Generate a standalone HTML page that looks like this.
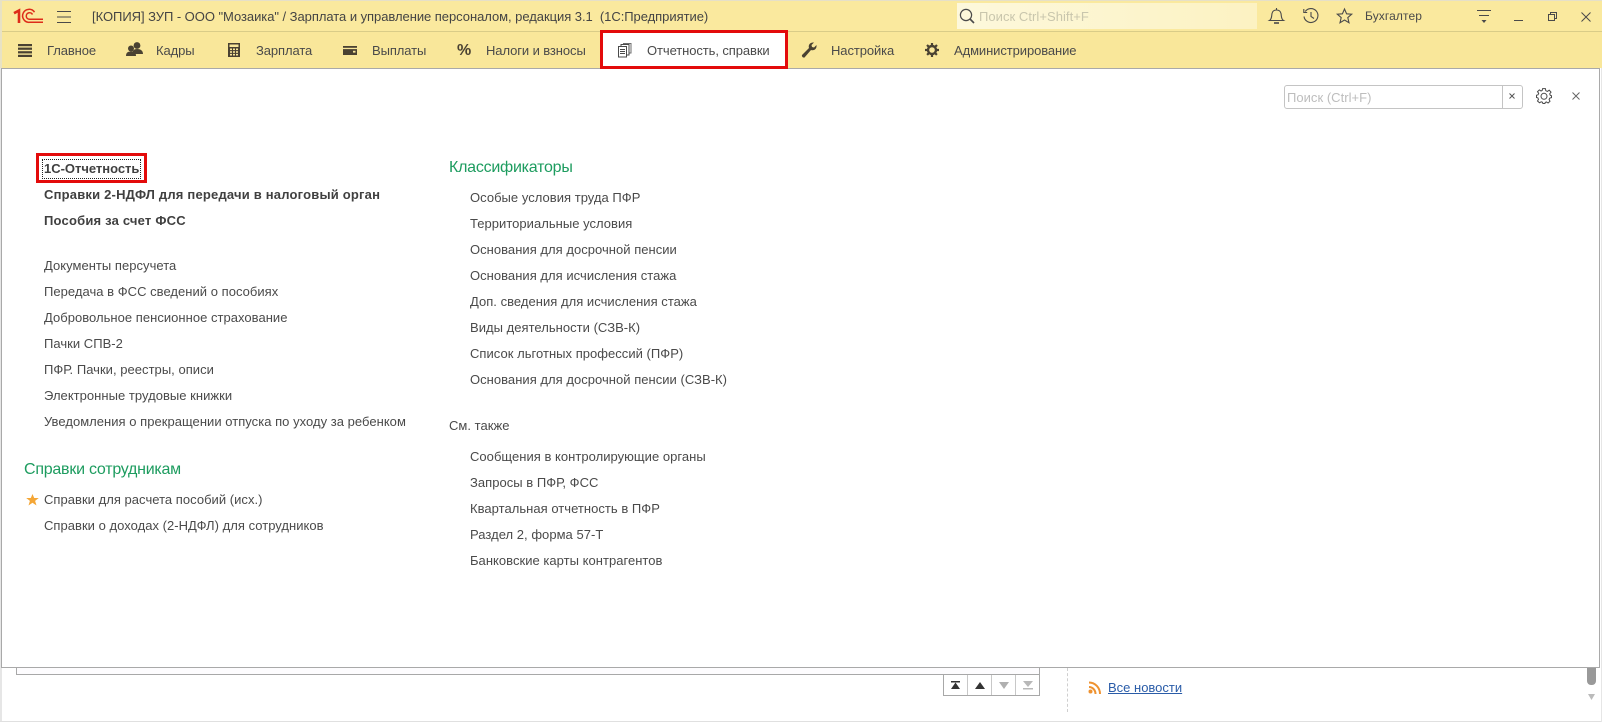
<!DOCTYPE html>
<html lang="ru"><head><meta charset="utf-8"><title>1C</title>
<style>
html,body{margin:0;padding:0;background:#fff}
#p{position:relative;width:1602px;height:722px;overflow:hidden;background:#fff;font:13px/16px "Liberation Sans",Arial,sans-serif;color:#4a4a4a}
.a{position:absolute;white-space:nowrap}
.t{position:absolute;white-space:nowrap;height:16px;letter-spacing:.03px}
.m{letter-spacing:-.09px}
.b{font-weight:bold;color:#404040;letter-spacing:.2px}
.g{color:#1d9c5f;font-size:16px;line-height:20px;height:20px;letter-spacing:-.24px}
svg{position:absolute;overflow:visible}
</style></head><body><div id="p">
<div class="a" style="left:0;top:0;width:1602px;height:1px;background:#e6e0c8"></div>
<div class="a" style="left:0;top:1px;width:1602px;height:31px;background:#fae99e;border-bottom:1px solid #d9cc88;box-sizing:border-box"></div>
<div class="a" style="left:0;top:32px;width:1602px;height:36px;background:#f9e79a"></div>
<div class="a" style="left:0;top:0;width:2px;height:68px;background:#e8e2c4"></div>
<div class="a" style="left:957px;top:3px;width:300px;height:26px;background:linear-gradient(90deg,#fdf8dc,#fcf2c2)"></div>

<!-- logo -->
<svg style="left:14px;top:9px" width="29" height="14" viewBox="0 0 29 14" fill="none" stroke="#dd2c1a">
<path d="M0 4.200 L5 1.500 V14" stroke-width="2.600"/>
<path d="M20.500 3.200 A6.500 6.500 0 1 0 15.500 13.300 H29" stroke-width="1.500"/>
<path d="M18.500 5.500 A3.300 3.300 0 1 0 15.500 10.300 H29" stroke-width="1.500"/>
</svg>
<svg style="left:57px;top:11px" width="15" height="12" fill="none" stroke="#4a4a4a"><path d="M0 .5H14M0 6H14M0 11.500H14"/></svg>
<div class="t" style="left:92px;top:9px;letter-spacing:-.045px;color:#444">[КОПИЯ] ЗУП - ООО "Мозаика" / Зарплата и управление персоналом, редакция 3.1&nbsp; (1С:Предприятие)</div>

<svg style="left:959px;top:8px" width="16" height="17" fill="none" stroke="#4a4a4a"><circle cx="7" cy="7" r="5.600" stroke-width="1.200"/><path d="M11 11 L15 15" stroke-width="1.600"/></svg>
<div class="t" style="left:979px;top:9px;color:#c9c6ad;letter-spacing:.05px">Поиск Ctrl+Shift+F</div>

<svg style="left:1269px;top:8px" width="15" height="17" fill="none" stroke="#4a4a4a" stroke-width="1.100"><path d="M.5 12.500 C3 11 2.500 8 3 5.500 C3.500 3 5 2 7.500 2 C10 2 11.500 3 12 5.500 C12.500 8 12 11 14.500 12.500 Z"/><path d="M7.500 0V2"/><path d="M5 15H10" stroke-width="1.600"/></svg>
<svg style="left:1303px;top:8px" width="16" height="16" fill="none" stroke="#4a4a4a" stroke-width="1.100"><path d="M2.200 3.500 A7 7 0 1 1 1 8.500"/><path d="M.8 1V4.500H4.200"/><path d="M8 4V8.500L11 10.500"/></svg>
<svg style="left:1337px;top:8px" width="16" height="16" fill="none" stroke="#4a4a4a" stroke-width="1.100"><path d="M7.500 1 L9.600 5.800 L14.700 6.200 L10.800 9.600 L12 14.700 L7.500 12 L3 14.700 L4.200 9.600 L.3 6.200 L5.400 5.800 Z"/></svg>
<div class="t" style="left:1365px;top:8px;font-size:12px;letter-spacing:.1px">Бухгалтер</div>
<svg style="left:1477px;top:10px" width="15" height="14" fill="#4a4a4a" stroke="#4a4a4a"><path d="M0 .5H14M2 5.500H12" fill="none"/><path d="M4.500 10H9.500L7 13Z" stroke="none"/></svg>
<svg style="left:1514px;top:20px" width="10" height="2"><rect width="9" height="1" fill="#4a4a4a"/></svg>
<svg style="left:1548px;top:12px" width="10" height="10" fill="none" stroke="#4a4a4a"><rect x=".5" y="2.500" width="6" height="6"/><path d="M2.500 2.500V.5H8.500V6.500H6.500"/></svg>
<svg style="left:1581px;top:12px" width="11" height="10" fill="none" stroke="#4a4a4a"><path d="M.5 .5L9.500 9.500M9.500 .5L.5 9.500"/></svg>

<!-- menu -->
<svg style="left:18px;top:44px" width="15" height="14" fill="#4a4232"><rect width="14" height="2.200"/><rect y="3.600" width="14" height="2.200"/><rect y="7.200" width="14" height="2.200"/><rect y="10.800" width="14" height="2.200"/></svg>
<div class="t m" style="left:47px;top:43px">Главное</div>
<svg style="left:126px;top:42px" width="17" height="15" fill="#4a4232"><circle cx="11" cy="3.500" r="3.400"/><path d="M6 13 C6 8.500 8 7 11 7 C14.500 7 17 8.500 17 12 H9 V13Z"/><circle cx="5" cy="6.500" r="3"/><path d="M0 14 C0 10.500 2 9.500 5 9.500 C8 9.500 10 10.500 10 14Z"/></svg>
<div class="t m" style="left:156px;top:43px">Кадры</div>
<svg style="left:228px;top:43px" width="13" height="14"><rect width="12" height="14" fill="#4a4232"/><rect x="1.500" y="1.500" width="9" height="2.500" fill="#f9e79a"/><g fill="#f9e79a"><rect x="2" y="5.500" width="2" height="1.600"/><rect x="5" y="5.500" width="2" height="1.600"/><rect x="8" y="5.500" width="2" height="1.600"/><rect x="2" y="8.200" width="2" height="1.600"/><rect x="5" y="8.200" width="2" height="1.600"/><rect x="8" y="8.200" width="2" height="1.600"/><rect x="2" y="10.900" width="2" height="1.600"/><rect x="5" y="10.900" width="2" height="1.600"/><rect x="8" y="10.900" width="2" height="1.600"/></g></svg>
<div class="t m" style="left:256px;top:43px">Зарплата</div>
<svg style="left:343px;top:46px" width="15" height="10"><rect width="14" height="9" fill="#4a4232"/><rect y="1.800" width="14" height="1.300" fill="#f9e79a"/><rect x="10" y="4.800" width="2.500" height="1.800" fill="#f9e79a"/></svg>
<div class="t m" style="left:372px;top:43px">Выплаты</div>
<div class="a" style="left:457px;top:42px;font:bold 16px/18px 'Liberation Sans',sans-serif;color:#4a4232">%</div>
<div class="t m" style="left:486px;top:43px">Налоги и взносы</div>
<svg style="left:801px;top:42px" width="16" height="16" fill="#4a4232"><path d="M1 13 L8 6 C7 3 9 0 13 .5 L10.500 3 L11 5 L13 5.500 L15.500 3 C16 7 13 9 10 8 L3.500 15.500 C2 16 .5 14.500 1 13Z"/></svg>
<div class="t m" style="left:831px;top:43px">Настройка</div>
<svg style="left:925px;top:43px" width="14" height="14" viewBox="0 0 14 14"><circle cx="7" cy="7" r="4" fill="none" stroke="#4a4232" stroke-width="2.400"/><path d="M7 0V14M0 7H14M2 2L12 12M12 2L2 12" stroke="#4a4232" stroke-width="2.200" stroke-dasharray="2.400 9.200 2.400"/></svg>
<div class="t m" style="left:954px;top:43px">Администрирование</div>

<!-- bg below -->
<div class="a" style="left:0;top:68px;width:2px;height:654px;background:#e6e6e6"></div>
<div class="a" style="left:0;top:721px;width:1602px;height:1px;background:#e0e0e0"></div>
<div class="a" style="left:1601px;top:68px;width:1px;height:654px;background:#e6e6e6"></div>
<div class="a" style="left:16px;top:660px;width:1024px;height:15px;border:1px solid #a8a8a8;box-sizing:border-box;background:#fdfcfe"></div>
<div class="a" style="left:943px;top:674px;width:97px;height:22px;border:1px solid #a8a8a8;box-sizing:border-box;background:#fff"></div>
<div class="a" style="left:967px;top:675px;width:1px;height:20px;background:#c8c8c8"></div>
<div class="a" style="left:991px;top:675px;width:1px;height:20px;background:#c8c8c8"></div>
<div class="a" style="left:1015px;top:675px;width:1px;height:20px;background:#c8c8c8"></div>
<svg style="left:950px;top:680px" width="84" height="10"><path d="M1 0H10V1.500H1ZM5.500 1.500L10 8H1Z" fill="#333" transform="translate(0,1)"/><path d="M25 9H35L30 2Z" fill="#333"/><path d="M49 2H59L54 9Z" fill="#b0b0b0"/><path d="M73 1H83L78 7Z M73 8H83V9.500H73Z" fill="#b8b8b8"/></svg>
<div class="a" style="left:1067px;top:668px;height:44px;border-left:1px dashed #cfcfcf"></div>
<svg style="left:1088px;top:681px" width="14" height="13" fill="none" stroke="#ee9230" stroke-width="2"><path d="M1 1.500C7 1.500 12 6.500 12 13"/><path d="M1 6C4.500 6 7.500 9 7.500 13"/><circle cx="2.500" cy="10.500" r="2" fill="#ee9230" stroke="none"/></svg>
<div class="t" style="left:1108px;top:680px;color:#2a5ca8;text-decoration:underline;letter-spacing:0">Все новости</div>
<div class="a" style="left:1587px;top:668px;width:9px;height:17px;background:#999;border-radius:0 0 4px 4px"></div>
<svg style="left:1588px;top:694px" width="8" height="7"><path d="M0 0H7L3.500 6Z" fill="#bbb"/></svg>

<!-- panel -->
<div class="a" style="left:1px;top:68px;width:1599px;height:600px;background:#fff;border:1px solid #a9a9a9;box-sizing:border-box"></div>
<div class="a" style="left:600px;top:30px;width:188px;height:39px;border:3px solid #e30b0b;box-sizing:border-box;background:#fff"></div>
<svg style="left:618px;top:43px" width="14" height="15" fill="none" stroke="#4a4a4a"><rect x=".5" y="3.500" width="8" height="10.500" fill="#fff"/><path d="M2 6.500H7M2 8.500H7M2 10.500H7"/><path d="M3 3V1.500H11V12H9"/><path d="M5.500 1V.5H13V10H11.500" opacity=".8"/></svg>
<div class="t m" style="left:647px;top:43px">Отчетность, справки</div>

<div class="a" style="left:1284px;top:85px;width:239px;height:24px;border:1px solid #c4c4c4;border-radius:3px;box-sizing:border-box"></div>
<div class="a" style="left:1502px;top:85px;width:1px;height:24px;background:#c4c4c4"></div>
<div class="t" style="left:1287px;top:90px;color:#bdbdbd">Поиск (Ctrl+F)</div>
<svg style="left:1509px;top:93px" width="7" height="7" stroke="#555" fill="none"><path d="M.5 .5L5.500 5.500M5.500 .5L.5 5.500"/></svg>
<svg style="left:1536px;top:88px" width="16" height="16" viewBox="0 0 16 16" fill="none" stroke="#4a4a4a" stroke-width="1"><path d="M6.600 .6H9.400L9.800 2.700L11.400 3.400L13.200 2.200L15 4.200L13.700 5.800L14.300 7.300L15.500 7.700V9.600L13.700 10.200L13.100 11.500L14 13.300L12.100 15L10.400 13.900L9.300 14.400L8.900 15.500H6.900L6.500 14.300L5.200 13.800L3.500 14.800L1.500 13L2.500 11.300L1.900 9.900L.5 9.500V7.200L2 6.800L2.700 5.300L1.500 3.700L3.400 1.900L5 3L6.200 2.400Z"/><circle cx="8" cy="8.300" r="3"/></svg>
<svg style="left:1572px;top:92px" width="9" height="9" stroke="#666" fill="none"><path d="M.5 .5L7.500 7.500M7.500 .5L.5 7.500"/></svg>

<!-- left col -->
<div class="a" style="left:36px;top:153px;width:111px;height:30px;border:3px solid #e30b0b;box-sizing:border-box"></div>
<div class="a" style="left:42px;top:159px;width:99px;height:20px;border:1px dotted #222;box-sizing:border-box"></div>
<div class="t b" style="left:44px;top:161px;letter-spacing:-.02px">1С-Отчетность</div>
<div class="t b" style="left:44px;top:187px">Справки 2-НДФЛ для передачи в налоговый орган</div>
<div class="t b" style="left:44px;top:213px">Пособия за счет ФСС</div>
<div class="t" style="left:44px;top:258px">Документы персучета</div>
<div class="t" style="left:44px;top:284px">Передача в ФСС сведений о пособиях</div>
<div class="t" style="left:44px;top:310px">Добровольное пенсионное страхование</div>
<div class="t" style="left:44px;top:336px">Пачки СПВ-2</div>
<div class="t" style="left:44px;top:362px">ПФР. Пачки, реестры, описи</div>
<div class="t" style="left:44px;top:388px">Электронные трудовые книжки</div>
<div class="t" style="left:44px;top:414px">Уведомления о прекращении отпуска по уходу за ребенком</div>
<div class="t g" style="left:24px;top:460px">Справки сотрудникам</div>
<svg style="left:26px;top:494px" width="13" height="12"><path d="M6.500 0L8.200 4H12.800L9.100 6.900L10.500 11.500L6.500 8.800L2.500 11.500L3.900 6.900L.2 4H4.800Z" fill="#f4a636"/></svg>
<div class="t" style="left:44px;top:492px">Справки для расчета пособий (исх.)</div>
<div class="t" style="left:44px;top:518px">Справки о доходах (2-НДФЛ) для сотрудников</div>

<!-- right col -->
<div class="t g" style="left:449px;top:158px">Классификаторы</div>
<div class="t" style="left:470px;top:190px">Особые условия труда ПФР</div>
<div class="t" style="left:470px;top:216px">Территориальные условия</div>
<div class="t" style="left:470px;top:242px">Основания для досрочной пенсии</div>
<div class="t" style="left:470px;top:268px">Основания для исчисления стажа</div>
<div class="t" style="left:470px;top:294px">Доп. сведения для исчисления стажа</div>
<div class="t" style="left:470px;top:320px">Виды деятельности (СЗВ-К)</div>
<div class="t" style="left:470px;top:346px">Список льготных профессий (ПФР)</div>
<div class="t" style="left:470px;top:372px">Основания для досрочной пенсии (СЗВ-К)</div>
<div class="t" style="left:449px;top:418px">См. также</div>
<div class="t" style="left:470px;top:449px">Сообщения в контролирующие органы</div>
<div class="t" style="left:470px;top:475px">Запросы в ПФР, ФСС</div>
<div class="t" style="left:470px;top:501px">Квартальная отчетность в ПФР</div>
<div class="t" style="left:470px;top:527px">Раздел 2, форма 57-Т</div>
<div class="t" style="left:470px;top:553px">Банковские карты контрагентов</div>
</div></body></html>
